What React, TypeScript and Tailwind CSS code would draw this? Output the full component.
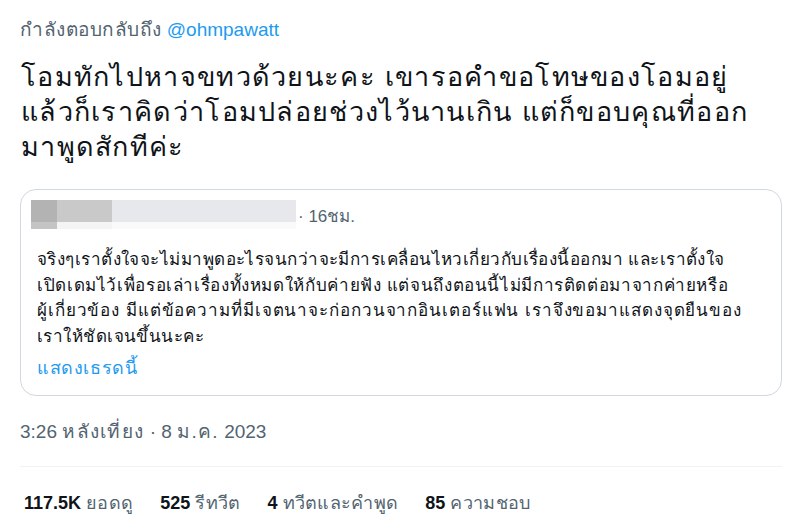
import React from "react";

const Stat = ({ value, label }: { value: string; label: string }) => (
  <span className="mr-[27px] whitespace-nowrap">
    <span className="font-bold text-[#0f1419]">{value}</span>{" "}
    <span className="text-[#536471] tracking-[0.3px]">{label}</span>
  </span>
);

export default function App() {
  return (
    <div className="w-[800px] h-[532px] bg-white overflow-hidden font-['Liberation_Sans','Noto_Sans',sans-serif]">
      <div className="pl-[20px] pr-[18px]">
        <div className="pt-[18px] text-[19px] leading-[24px] text-[#536471]">
          <span className="tracking-[0.5px]">กำลังตอบกลับถึง</span>{" "}
          <span className="text-[#1d9bf0]">@ohmpawatt</span>
        </div>

        <p className="mt-[18px] pl-[1px] text-[27px] leading-[35px] tracking-[1.3px] text-[#0f1419]">
          โอมทักไปหาจขทวด้วยนะคะ เขารอคำขอโทษของโอมอยู่
          <br />
          แล้วก็เราคิดว่าโอมปล่อยช่วงไว้นานเกิน แต่ก็ขอบคุณที่ออก
          <br />
          มาพูดสักทีค่ะ
        </p>

        <div className="mt-[24px] h-[207px] rounded-[16px] border border-[#cfd9de] pl-[10px] pr-[11px] pt-[10px]">
          <div className="flex items-start gap-[2px]">
            {/* blurred display name */}
            <div className="flex flex-col">
              <div className="flex h-[22px]">
                <div className="w-[26px] bg-[#b3b3b3]" />
                <div className="w-[55px] bg-[#c9c9c9]" />
                <div className="w-[184px] bg-[#e6e8eb]" />
              </div>
              <div className="flex h-[7px]">
                <div className="w-[26px] bg-[#c4c4c4]" />
                <div className="w-[55px] bg-[#f4f4f4]" />
                <div className="w-[184px] bg-[#fafafa]" />
              </div>
            </div>
            <span className="mt-[6px] text-[17px] leading-[22px] text-[#536471]">· 16ชม.</span>
          </div>

          <p className="mt-[18px] pl-[6px] text-[17px] leading-[25.5px] text-[#0f1419]">
            <span className="tracking-[0.45px]">
              จริงๆเราตั้งใจจะไม่มาพูดอะไรจนกว่าจะมีการเคลื่อนไหวเกี่ยวกับเรื่องนี้ออกมา และเราตั้งใจ
            </span>
            <br />
            <span className="tracking-[0.63px]">
              เปิดเดมไว้เพื่อรอเล่าเรื่องทั้งหมดให้กับค่ายฟัง แต่จนถึงตอนนี้ไม่มีการติดต่อมาจากค่ายหรือ
            </span>
            <br />
            <span className="tracking-[0.9px]">
              ผู้เกี่ยวข้อง มีแต่ข้อความที่มีเจตนาจะก่อกวนจากอินเตอร์แฟน เราจึงขอมาแสดงจุดยืนของ
            </span>
            <br />
            <span className="tracking-[0.45px]">เราให้ชัดเจนขึ้นนะคะ</span>
          </p>

          <div className="mt-[7px] pl-[6px] text-[18px] leading-[24px] tracking-[0.6px] text-[#1d9bf0]">
            แสดงเธรดนี้
          </div>
        </div>

        <div className="mt-[24px] text-[19px] leading-[24px] text-[#536471]">
          3:26 <span className="tracking-[1.3px]">หลังเที่ยง</span> · 8{" "}
          <span className="tracking-[1.3px]">ม.ค.</span> 2023
        </div>

        <div className="mt-[22px] border-t border-[#eff3f4]" />

        <div className="pt-[24px] pl-[4px] text-[18px] leading-[24px]">
          <Stat value="117.5K" label="ยอดดู" />
          <Stat value="525" label="รีทวีต" />
          <Stat value="4" label="ทวีตและคำพูด" />
          <Stat value="85" label="ความชอบ" />
        </div>
      </div>
    </div>
  );
}
